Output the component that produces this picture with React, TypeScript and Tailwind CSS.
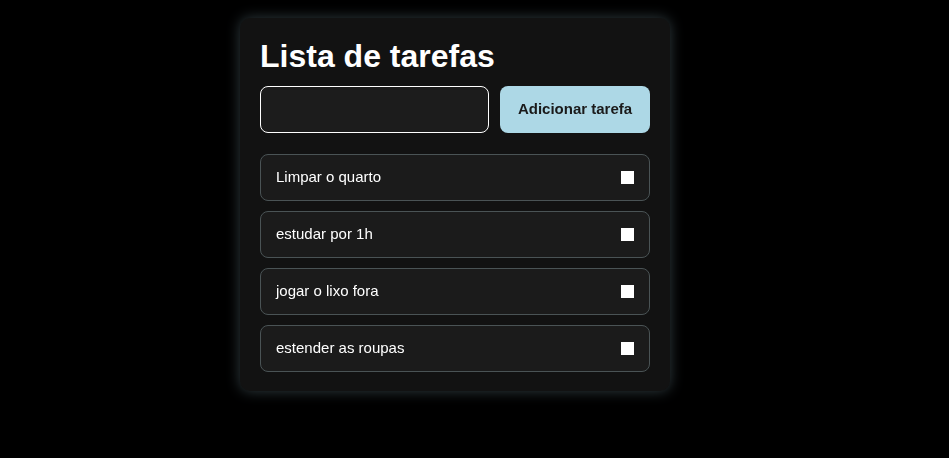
const tasks = ['Limpar o quarto', 'estudar por 1h', 'jogar o lixo fora', 'estender as roupas'];

export default function App() {
  return (
    <div className="min-h-[458px] bg-black pt-[18px] pl-[240px] font-['Liberation_Sans',Arial,sans-serif]">
      <div className="w-[430px] rounded-[10px] bg-[#121212] px-5 pt-[20px] pb-[19px] shadow-[0_0_14px_rgba(173,216,230,0.28)]">
        <h1 className="text-[32px] leading-[37px] font-bold text-white">Lista de tarefas</h1>
        <div className="mt-[11px] flex gap-[11px]">
          <input
            autoFocus
            className="h-[47px] w-[229px] rounded-[8px] border border-white bg-[#1c1c1c] px-4 text-[15px] text-white caret-white outline-none"
          />
          <button className="h-[47px] flex-1 rounded-[8px] bg-[#add8e6] text-[15px] font-bold text-[#1a1a1a]">
            Adicionar tarefa
          </button>
        </div>
        <ul className="mt-[21px] flex flex-col gap-[10px]">
          {tasks.map((t) => (
            <li
              key={t}
              className="flex h-[47px] items-center justify-between rounded-[8px] border border-[#4a5355] bg-[#1b1b1b] pl-[15px] pr-[15px] text-[15px] text-white"
            >
              <span>{t}</span>
              <span className="h-[13px] w-[13px] bg-white" />
            </li>
          ))}
        </ul>
      </div>
    </div>
  );
}
